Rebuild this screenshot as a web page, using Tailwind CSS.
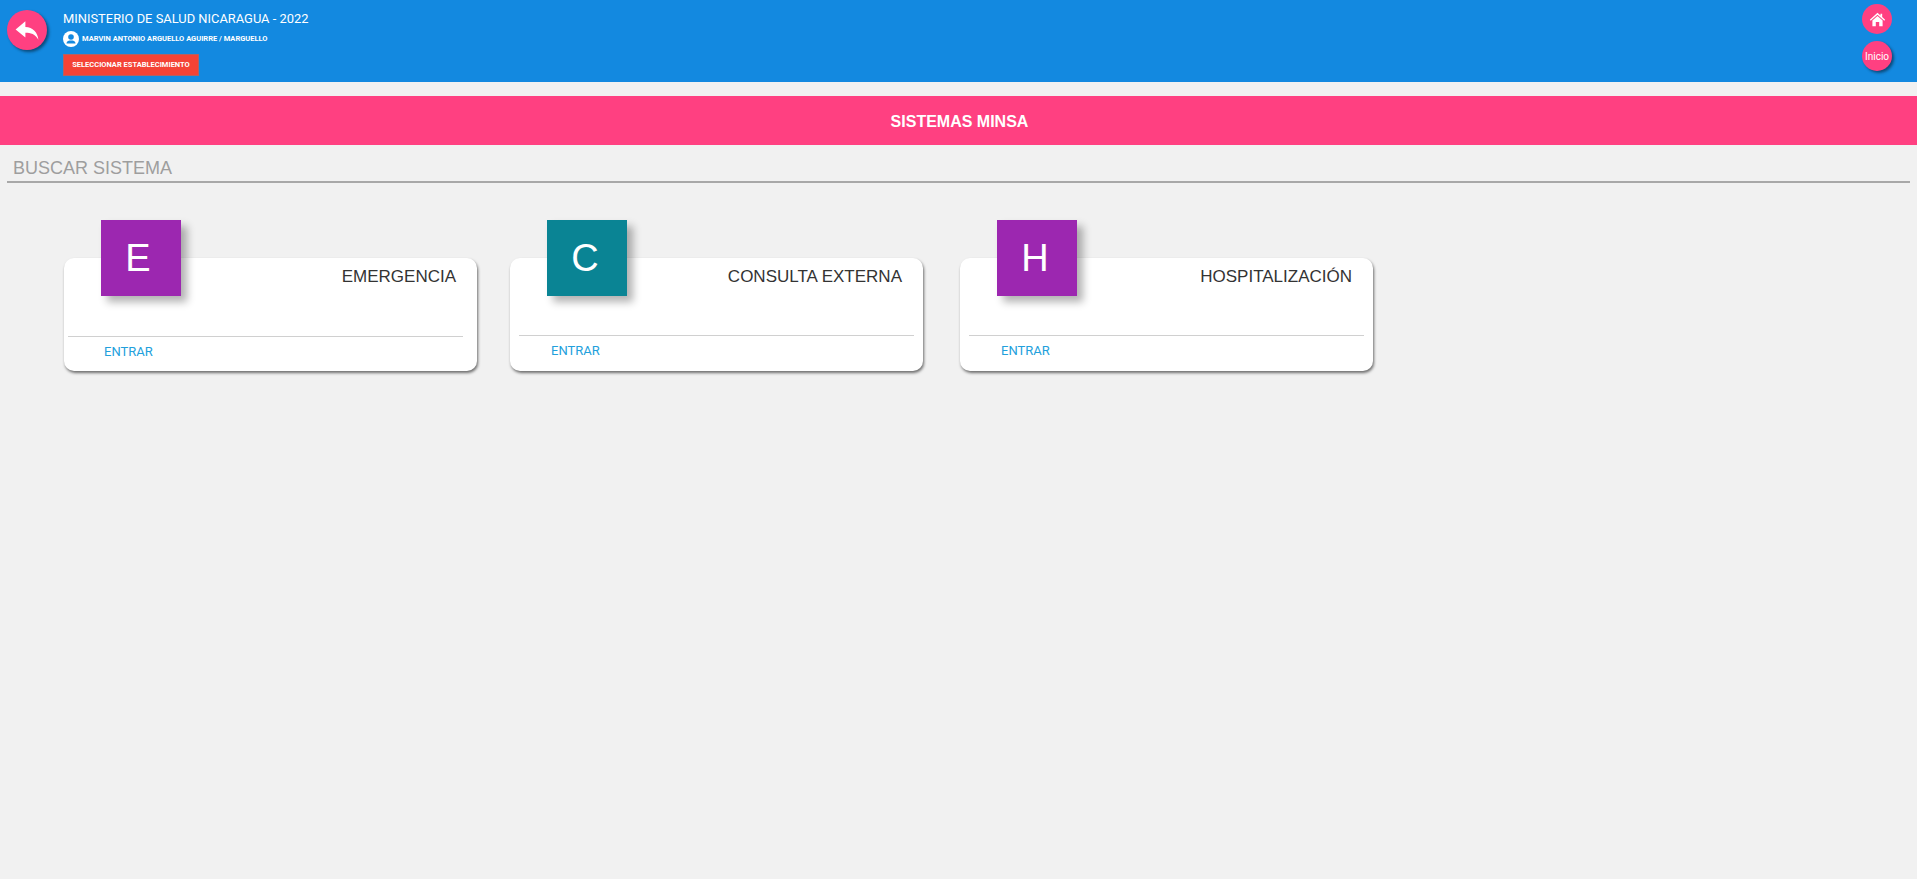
<!DOCTYPE html>
<html lang="es">
<head>
    <meta charset="UTF-8">
    <meta name="viewport" content="width=device-width, initial-scale=1.0">
    <title>Sistemas MINSA</title>
    <script src="https://cdn.jsdelivr.net/npm/@tailwindcss/browser@4"></script>
</head>
<body class="bg-[#f1f1f1] min-h-screen font-['Liberation_Sans',Arial,sans-serif]">
    <!-- header -->
    <header class="h-[82px] bg-[#1389e0] flex justify-between text-white">
        <div class="flex">
            <button class="mt-[10px] ml-[7px] w-[40px] h-[40px] rounded-full bg-[#ff4081] shadow-[2px_2px_3px_rgba(0,0,0,0.45)] flex items-center justify-center">
                <svg viewBox="0 0 24 24" class="w-[26px] h-[26px] fill-white"><path d="M10.5 4 L1.5 11.5 L10.5 19 V14.6 C15.5 14.6 19.5 15.8 22.5 21 C21.8 14 17.5 9.6 10.5 9.2 Z"/></svg>
            </button>
            <div class="ml-[16px]">
                <div class="mt-[11px] text-[12.9px] leading-[15px] font-['Roboto',sans-serif]">MINISTERIO DE SALUD NICARAGUA - 2022</div>
                <div class="mt-[5px] flex items-center h-[16px]">
                    <span class="w-[16px] h-[16px] rounded-full bg-white flex items-center justify-center">
                        <svg viewBox="0 0 16 16" class="w-[16px] h-[16px] fill-[#1389e0]"><circle cx="8" cy="6" r="2.8"/><path d="M3.5 12.5 C3.5 10 6 9.5 8 9.5 C10 9.5 12.5 10 12.5 12.5 Z"/></svg>
                    </span>
                    <span class="ml-[3px] text-[7.5px] font-bold font-['Roboto',sans-serif]">MARVIN ANTONIO ARGUELLO AGUIRRE / MARGUELLO</span>
                </div>
                <button class="block mt-[7px] w-[136px] h-[22px] bg-[#f44336] border border-[#6f7f8f]/50 text-[7.5px] font-bold font-['Roboto',sans-serif] text-white">SELECCIONAR ESTABLECIMIENTO</button>
            </div>
        </div>
        <div class="flex flex-col items-center mr-[25px] pt-[4px] gap-[7px]">
            <button class="w-[30px] h-[30px] rounded-full bg-[#ff4081] flex items-center justify-center">
                <svg viewBox="0 0 20 20" class="w-[17px] h-[17px] fill-white"><path d="M10 2 L13.5 5.2 V3.2 H15.5 V7 L19 10.2 L18 11.4 L10 4.4 L2 11.4 L1 10.2 Z"/><path d="M4 11.2 L10 6 L16 11.2 V18 H12 V13 H8 V18 H4 Z"/></svg>
            </button>
            <button class="w-[30px] h-[30px] rounded-full bg-[#ff4081] shadow-[2px_2px_3px_rgba(0,0,0,0.45)] text-[10px] text-white pt-[1px] font-['Roboto',sans-serif]">Inicio</button>
        </div>
    </header>

    <!-- title band -->
    <div class="mt-[14px] h-[49px] bg-[#ff4081] flex items-center justify-center text-white font-bold text-[16px] pt-[2px] pl-[2px]">SISTEMAS MINSA</div>

    <!-- search -->
    <div class="mx-[7px] h-[38px] border-b-2 border-[#a8a8a8] flex items-center pl-[6px] pt-[10px] text-[18px] text-[#9e9e9e]">BUSCAR SISTEMA</div>

    <!-- cards -->
    <div class="flex pl-[64px] pt-[37px]">
        <div class="w-[413px] mr-[33px]">
            <div class="ml-[37px] w-[80px] h-[76px] bg-[#9c27b0] text-white text-[38px] flex items-center justify-center pr-[6px] shadow-[6px_6px_8px_rgba(0,0,0,0.3)] relative z-10">E</div>
            <div class="-mt-[38px] h-[113px] bg-white rounded-[10px] shadow-[1px_2px_3px_rgba(0,0,0,0.55)] relative">
                <div class="text-right pr-[21px] pt-[9px] text-[17px] leading-[20px] text-[#333]">EMERGENCIA</div>
                <div class="mt-[49px] ml-[4px] mr-[14px] border-t border-[#d0d0d0]"></div>
                <div class="pl-[40px] pt-[7px] text-[13px] leading-[15px] text-[#22a0dc] font-['Roboto',sans-serif]">ENTRAR</div>
            </div>
        </div>
        <div class="w-[413px] mr-[37px]">
            <div class="ml-[37px] w-[80px] h-[76px] bg-[#0a8494] text-white text-[38px] flex items-center justify-center pr-[4px] shadow-[6px_6px_8px_rgba(0,0,0,0.3)] relative z-10">C</div>
            <div class="-mt-[38px] h-[113px] bg-white rounded-[10px] shadow-[1px_2px_3px_rgba(0,0,0,0.55)] relative">
                <div class="text-right pr-[21px] pt-[9px] text-[17px] leading-[20px] text-[#333]">CONSULTA EXTERNA</div>
                <div class="mt-[48px] ml-[9px] mr-[9px] border-t border-[#d0d0d0]"></div>
                <div class="pl-[41px] pt-[7px] text-[13px] leading-[15px] text-[#22a0dc] font-['Roboto',sans-serif]">ENTRAR</div>
            </div>
        </div>
        <div class="w-[413px]">
            <div class="ml-[37px] w-[80px] h-[76px] bg-[#9c27b0] text-white text-[38px] flex items-center justify-center pr-[4px] shadow-[6px_6px_8px_rgba(0,0,0,0.3)] relative z-10">H</div>
            <div class="-mt-[38px] h-[113px] bg-white rounded-[10px] shadow-[1px_2px_3px_rgba(0,0,0,0.55)] relative">
                <div class="text-right pr-[21px] pt-[9px] text-[17px] leading-[20px] text-[#333]">HOSPITALIZACIÓN</div>
                <div class="mt-[48px] ml-[9px] mr-[9px] border-t border-[#d0d0d0]"></div>
                <div class="pl-[41px] pt-[7px] text-[13px] leading-[15px] text-[#22a0dc] font-['Roboto',sans-serif]">ENTRAR</div>
            </div>
        </div>
    </div>
</body>
</html>
